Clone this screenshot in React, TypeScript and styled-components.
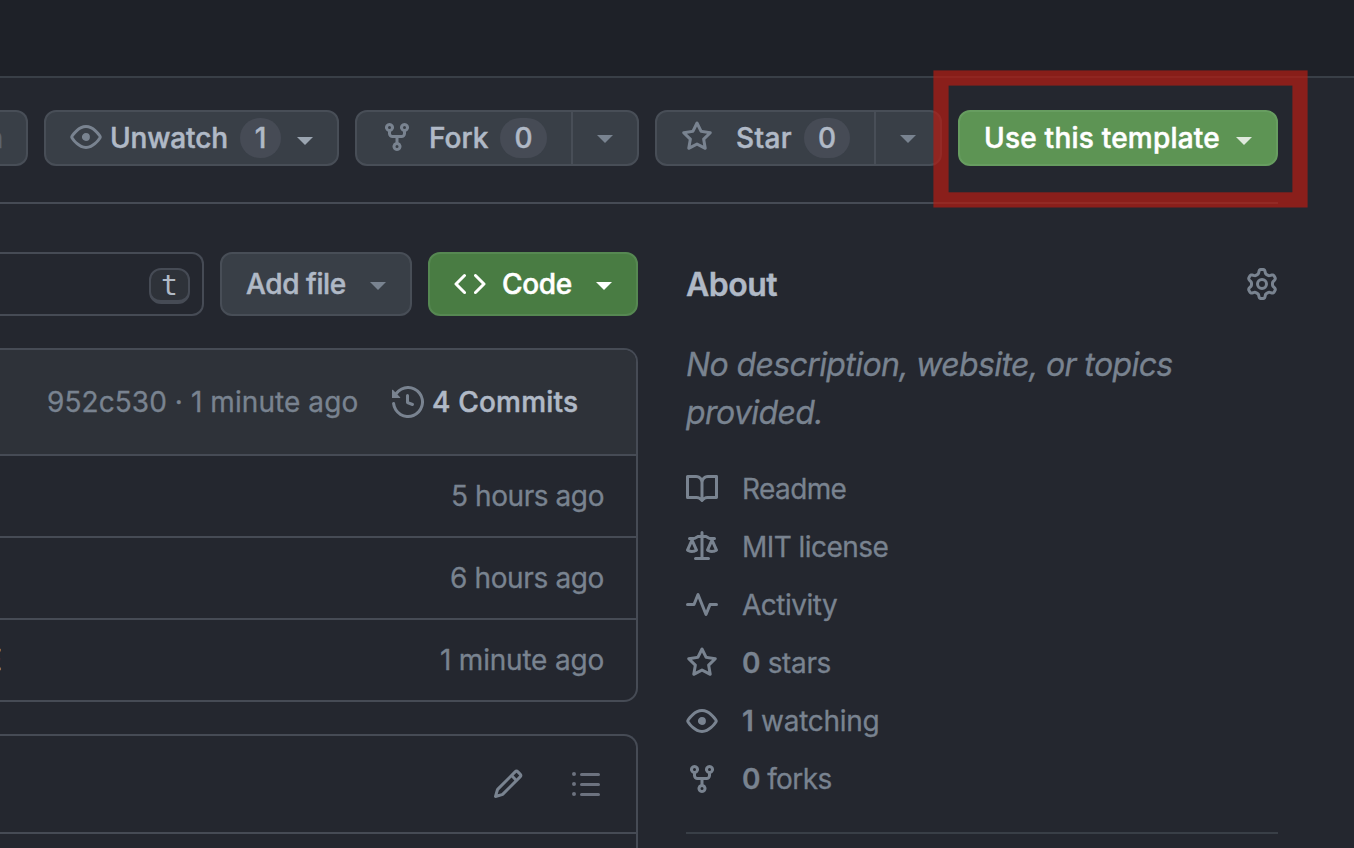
import React from "react";
import styled, { createGlobalStyle } from "styled-components";

const Global = createGlobalStyle`
  * { box-sizing: border-box; }
  html, body { margin: 0; padding: 0; background: #24272f; }
  body {
    font-family: Inter, "Liberation Sans", sans-serif;
    font-size: 28px;
    color: #b0b9c6;
    overflow: hidden;
  }
`;

const Page = styled.div`
  position: relative;
  width: 1354px;
  height: 848px;
  overflow: hidden;
  background: #24272f;
`;

const TopBar = styled.header`
  height: 78px;
  background: #1e2128;
  border-bottom: 2px solid #393f47;
`;

const Actions = styled.div`
  width: 1278px;
  height: 126px;
  padding-top: 32px;
  display: flex;
  gap: 16px;
  border-bottom: 2px solid #464b55;
`;

const Button = styled.div<{ $w: number; $h?: number; $tone?: "green" | "light"; $pad?: number }>`
  width: ${(p) => p.$w}px;
  height: ${(p) => p.$h ?? 56}px;
  padding-left: ${(p) => p.$pad ?? 24}px;
  display: flex;
  align-items: center;
  flex: none;
  overflow: hidden;
  border-radius: 12px;
  border: 2px solid ${(p) => (p.$tone === "green" ? "#568852" : p.$tone === "light" ? "#679d60" : "#484e57")};
  background: ${(p) => (p.$tone === "green" ? "#497c43" : p.$tone === "light" ? "#5d9454" : "#393f47")};
  color: ${(p) => (p.$tone ? "#fff" : "#b0b9c6")};
`;

const PinButton = styled(Button)`
  padding: 0 23px 0 0;
  justify-content: flex-end;
  border-left: 0;
  border-radius: 0 12px 12px 0;
  color: #5d6570;
`;

const Label = styled.span<{ $w?: number; $ls?: number; $weight?: number; $gap?: number }>`
  width: ${(p) => (p.$w ? `${p.$w}px` : "auto")};
  margin-left: ${(p) => p.$gap ?? 0}px;
  flex: none;
  font-weight: ${(p) => p.$weight ?? 500};
  letter-spacing: ${(p) => p.$ls ?? 0}px;
  -webkit-text-stroke: ${(p) => (p.$weight === 400 ? 0.3 : 0.5)}px currentColor;
  line-height: 40px;
  white-space: nowrap;
`;

const Counter = styled.span<{ $w: number }>`
  width: ${(p) => p.$w}px;
  height: 40px;
  flex: none;
  border-radius: 20px;
  background: #464b55;
  font-weight: 500;
  -webkit-text-stroke: 0.4px currentColor;
  line-height: 40px;
  text-align: center;
`;

const Caret = styled.span<{ $gap?: number; $color?: string; $drop?: number }>`
  flex: none;
  margin-left: ${(p) => p.$gap ?? 0}px;
  margin-top: ${(p) => p.$drop ?? 0}px;
  border: 8px solid transparent;
  border-top-color: ${(p) => p.$color ?? "#798390"};
  border-bottom: 0;
`;

const SplitEnd = styled.span<{ $gap: number }>`
  margin-left: ${(p) => p.$gap}px;
  flex: 1;
  height: 52px;
  display: flex;
  align-items: center;
  justify-content: center;
  border-left: 2px solid #484e57;
`;

const Highlight = styled.svg`
  position: absolute;
  left: 930px;
  top: 67px;
  fill: none;
  stroke: rgba(178, 29, 19, 0.72);
  stroke-width: 15.2px;
`;

const Content = styled.main`
  display: flex;
  gap: 48px;
  padding-top: 48px;
`;

const Files = styled.section`
  width: 638px;
  flex: none;
`;

const Toolbar = styled.div`
  display: flex;
  gap: 16px;
`;

const Search = styled.div`
  width: 204px;
  height: 64px;
  padding: 4px 12px 0 0;
  display: flex;
  align-items: center;
  justify-content: flex-end;
  border: 2px solid #464b55;
  border-left: 0;
  border-radius: 0 12px 12px 0;
`;

const Key = styled.kbd`
  width: 41px;
  height: 36px;
  border: 2px solid #464b55;
  border-bottom-width: 4px;
  border-radius: 12px;
  background: #2e3239;
  font: 28px/32px "DejaVu Sans Mono", monospace;
  text-align: center;
`;

const Panel = styled.div`
  margin-top: 32px;
  border: 2px solid #464b55;
  border-left: 0;
  border-radius: 0 14px 14px 0;
  overflow: hidden;
`;

const Commit = styled.div`
  height: 104px;
  padding-left: 47px;
  display: flex;
  align-items: center;
  background: #2e3239;
  color: #798390;
`;

const Bright = styled(Label)`
  color: #b0b9c6;
`;

const FileRow = styled.div`
  height: 82px;
  padding-right: 32px;
  display: flex;
  align-items: center;
  justify-content: space-between;
  border-top: 2px solid #464b55;
  color: #798390;
`;

const FileName = styled.span`
  width: 2px;
  display: flex;
  justify-content: flex-end;
  color: #b0b9c6;
`;

const ReadmePanel = styled(Panel)`
  height: 140px;
  border-radius: 0 14px 0 0;
`;

const ReadmeTools = styled.div`
  height: 98px;
  padding-right: 34px;
  display: flex;
  align-items: center;
  justify-content: flex-end;
  gap: 46px;
  color: #798390;
  border-bottom: 2px solid #464b55;

  svg:last-child { color: #6c727f; }
`;

const About = styled.aside`
  width: 592px;
  height: 582px;
  flex: none;
  color: #798390;
  border-bottom: 2px solid #393f47;
`;

const AboutHead = styled.div`
  height: 64px;
  display: flex;
  align-items: center;
  justify-content: space-between;
`;

const Title = styled.h2`
  margin: 0;
  font-size: 32px;
  font-weight: 600;
  letter-spacing: -0.5px;
  -webkit-text-stroke: 0.4px currentColor;
  color: #b0b9c6;
`;

const Description = styled.p`
  margin: 25px 0 31px;
  font-size: 32px;
  line-height: 48px;
  font-style: italic;
  letter-spacing: -0.61px;
  -webkit-text-stroke: 0.3px currentColor;
`;

const Fact = styled.div`
  height: 42px;
  margin-bottom: 16px;
  display: flex;
  align-items: center;
  gap: 24px;

  b { font-weight: 600; }
`;

const Svg = styled.svg<{ $lift?: number }>`
  flex: none;
  display: block;
  fill: currentColor;
  margin-bottom: ${(p) => p.$lift ?? 0}px;
`;

const MutedSvg = styled(Svg)`
  color: #798390;
`;

const paths = {
  eye: "M8 2c1.981 0 3.671.992 4.933 2.078 1.27 1.091 2.187 2.345 2.637 3.023a1.62 1.62 0 0 1 0 1.798c-.45.678-1.367 1.932-2.637 3.023C11.67 13.008 9.981 14 8 14c-1.981 0-3.671-.992-4.933-2.078C1.797 10.83.88 9.576.43 8.898a1.62 1.62 0 0 1 0-1.798c.45-.677 1.367-1.931 2.637-3.022C4.33 2.992 6.019 2 8 2ZM1.679 7.932a.12.12 0 0 0 0 .136c.411.622 1.241 1.75 2.366 2.717C5.176 11.758 6.527 12.5 8 12.5c1.473 0 2.825-.742 3.955-1.715 1.124-.967 1.954-2.096 2.366-2.717a.12.12 0 0 0 0-.136c-.412-.621-1.242-1.75-2.366-2.717C10.824 4.242 9.473 3.5 8 3.5c-1.473 0-2.825.742-3.955 1.715-1.124.967-1.954 2.096-2.366 2.717ZM8 10a2 2 0 1 1-.001-3.999A2 2 0 0 1 8 10Z",
  fork: "M5 5.372v.878c0 .414.336.75.75.75h4.5a.75.75 0 0 0 .75-.75v-.878a2.25 2.25 0 1 1 1.5 0v.878a2.25 2.25 0 0 1-2.25 2.25h-1.5v2.128a2.251 2.251 0 1 1-1.5 0V8.5h-1.5A2.25 2.25 0 0 1 3.5 6.25v-.878a2.25 2.25 0 1 1 1.5 0ZM5 3.25a.75.75 0 1 0-1.5 0 .75.75 0 0 0 1.5 0Zm6.75.75a.75.75 0 1 0 0-1.5.75.75 0 0 0 0 1.5Zm-3 8.75a.75.75 0 1 0-1.5 0 .75.75 0 0 0 1.5 0Z",
  star: "M8 .25a.75.75 0 0 1 .673.418l1.882 3.815 4.21.612a.75.75 0 0 1 .416 1.279l-3.046 2.97.719 4.192a.751.751 0 0 1-1.088.791L8 12.347l-3.766 1.98a.75.75 0 0 1-1.088-.79l.72-4.194L.818 6.374a.75.75 0 0 1 .416-1.28l4.21-.611L7.327.668A.75.75 0 0 1 8 .25Zm0 2.445L6.615 5.5a.75.75 0 0 1-.564.41l-3.097.45 2.24 2.184a.75.75 0 0 1 .216.664l-.528 3.084 2.769-1.456a.75.75 0 0 1 .698 0l2.77 1.456-.53-3.084a.75.75 0 0 1 .216-.664l2.24-2.183-3.096-.45a.75.75 0 0 1-.564-.41L8 2.694Z",
  code: "m11.28 3.22 4.25 4.25a.75.75 0 0 1 0 1.06l-4.25 4.25a.749.749 0 0 1-1.275-.326.749.749 0 0 1 .215-.734L13.94 8l-3.72-3.72a.749.749 0 0 1 .326-1.275.749.749 0 0 1 .734.215Zm-6.56 0a.751.751 0 0 1 1.042.018.751.751 0 0 1 .018 1.042L2.06 8l3.72 3.72a.749.749 0 0 1-.326 1.275.749.749 0 0 1-.734-.215L.47 8.53a.75.75 0 0 1 0-1.06Z",
  history: "m.427 1.927 1.215 1.215a8.002 8.002 0 1 1-1.6 5.685.75.75 0 1 1 1.493-.154 6.5 6.5 0 1 0 1.18-4.458l1.358 1.358A.25.25 0 0 1 3.896 6H.25A.25.25 0 0 1 0 5.75V2.104a.25.25 0 0 1 .427-.177ZM7.75 4a.75.75 0 0 1 .75.75v2.992l2.028.812a.75.75 0 0 1-.557 1.392l-2.5-1A.751.751 0 0 1 7 8.25v-3.5A.75.75 0 0 1 7.75 4Z",
  gear: "M8 0a8.2 8.2 0 0 1 .701.031C9.444.095 9.99.645 10.16 1.29l.288 1.107c.018.066.079.158.212.224.231.114.454.243.668.386.123.082.233.09.299.071l1.103-.303c.644-.176 1.392.021 1.82.63.27.385.506.792.704 1.218.315.675.111 1.422-.364 1.891l-.814.806c-.049.048-.098.147-.088.294.016.257.016.515 0 .772-.01.147.038.246.088.294l.814.806c.475.469.679 1.216.364 1.891a7.977 7.977 0 0 1-.704 1.217c-.428.61-1.176.807-1.82.63l-1.102-.302c-.067-.019-.177-.011-.3.071a5.909 5.909 0 0 1-.668.386c-.133.066-.194.158-.211.224l-.29 1.106c-.168.646-.715 1.196-1.458 1.26a8.006 8.006 0 0 1-1.402 0c-.743-.064-1.289-.614-1.458-1.26l-.289-1.106c-.018-.066-.079-.158-.212-.224a5.738 5.738 0 0 1-.668-.386c-.123-.082-.233-.09-.299-.071l-1.103.303c-.644.176-1.392-.021-1.82-.63a8.12 8.12 0 0 1-.704-1.218c-.315-.675-.111-1.422.363-1.891l.815-.806c.05-.048.098-.147.088-.294a6.214 6.214 0 0 1 0-.772c.01-.147-.038-.246-.088-.294l-.815-.806C.635 6.045.431 5.298.746 4.623a7.92 7.92 0 0 1 .704-1.217c.428-.61 1.176-.807 1.82-.63l1.102.302c.067.019.177.011.3-.071.214-.143.437-.272.668-.386.133-.066.194-.158.211-.224l.29-1.106C6.009.645 6.556.095 7.299.03 7.53.01 7.764 0 8 0Zm-.571 1.525c-.036.003-.108.036-.137.146l-.289 1.105c-.147.561-.549.967-.998 1.189-.173.086-.34.183-.5.29-.417.278-.97.423-1.529.27l-1.103-.303c-.109-.03-.175.016-.195.045-.22.312-.412.644-.573.99-.014.031-.021.11.059.19l.815.806c.411.406.562.957.53 1.456a4.709 4.709 0 0 0 0 .582c.032.499-.119 1.05-.53 1.456l-.815.806c-.081.08-.073.159-.059.19.162.346.353.677.573.989.02.03.085.076.195.046l1.102-.303c.56-.153 1.113-.008 1.53.27.161.107.328.204.501.29.447.222.85.629.997 1.189l.289 1.105c.029.109.101.143.137.146a6.6 6.6 0 0 0 1.142 0c.036-.003.108-.036.137-.146l.289-1.105c.147-.561.549-.967.998-1.189.173-.086.34-.183.5-.29.417-.278.97-.423 1.529-.27l1.103.303c.109.029.175-.016.195-.045.22-.313.411-.644.573-.99.014-.031.021-.11-.059-.19l-.815-.806c-.411-.406-.562-.957-.53-1.456a4.709 4.709 0 0 0 0-.582c-.032-.499.119-1.05.53-1.456l.815-.806c.081-.08.073-.159.059-.19a6.464 6.464 0 0 0-.573-.989c-.02-.03-.085-.076-.195-.046l-1.102.303c-.56.153-1.113.008-1.53-.27a4.44 4.44 0 0 0-.501-.29c-.447-.222-.85-.629-.997-1.189l-.289-1.105c-.029-.11-.101-.143-.137-.146a6.6 6.6 0 0 0-1.142 0ZM11 8a3 3 0 1 1-6 0 3 3 0 0 1 6 0ZM9.5 8a1.5 1.5 0 1 0-3.001.001A1.5 1.5 0 0 0 9.5 8Z",
  book: "M0 1.75A.75.75 0 0 1 .75 1h4.253c1.227 0 2.317.59 3 1.501A3.743 3.743 0 0 1 11.006 1h4.245a.75.75 0 0 1 .75.75v10.5a.75.75 0 0 1-.75.75h-4.507a2.25 2.25 0 0 0-1.591.659l-.622.621a.75.75 0 0 1-1.06 0l-.622-.621A2.25 2.25 0 0 0 5.258 13H.75a.75.75 0 0 1-.75-.75Zm7.251 10.324.004-5.073-.002-2.253A2.25 2.25 0 0 0 5.003 2.5H1.5v9h3.757a3.75 3.75 0 0 1 1.994.574ZM8.755 4.75l-.004 7.322a3.752 3.752 0 0 1 1.992-.572H14.5v-9h-3.495a2.25 2.25 0 0 0-2.25 2.25Z",
  law: "M8.75.75V2h.985c.304 0 .603.08.867.231l1.29.736c.038.022.08.033.124.033h2.234a.75.75 0 0 1 0 1.5h-.427l2.111 4.692a.75.75 0 0 1-.154.838l-.53-.53.529.531-.001.002-.002.002-.006.006-.006.005-.01.01-.045.04c-.21.176-.441.327-.686.45C14.556 10.78 13.88 11 13 11a4.498 4.498 0 0 1-2.023-.454 3.544 3.544 0 0 1-.686-.45l-.045-.04-.016-.015-.006-.006-.004-.004v-.001a.75.75 0 0 1-.154-.838L12.178 4.5h-.162c-.305 0-.604-.079-.868-.231l-1.29-.736a.245.245 0 0 0-.124-.033H8.75V13h2.5a.75.75 0 0 1 0 1.5h-6.5a.75.75 0 0 1 0-1.5h2.5V3.5h-.984a.245.245 0 0 0-.124.033l-1.289.737c-.265.15-.564.23-.869.23h-.162l2.112 4.692a.75.75 0 0 1-.154.838l-.53-.53.529.531-.001.002-.002.002-.006.006-.016.015-.045.04c-.21.176-.441.327-.686.45C4.556 10.78 3.88 11 3 11a4.498 4.498 0 0 1-2.023-.454 3.544 3.544 0 0 1-.686-.45l-.045-.04-.016-.015-.006-.006-.004-.004v-.001a.75.75 0 0 1-.154-.838L2.178 4.5H1.75a.75.75 0 0 1 0-1.5h2.234a.249.249 0 0 0 .125-.033l1.288-.737c.265-.15.564-.23.869-.23h.984V.75a.75.75 0 0 1 1.5 0Zm2.945 8.477c.285.135.718.273 1.305.273s1.02-.138 1.305-.273L13 6.327Zm-10 0c.285.135.718.273 1.305.273s1.02-.138 1.305-.273L3 6.327Z",
  pulse: "M6 2c.306 0 .582.187.696.471L10 10.731l1.304-3.26A.751.751 0 0 1 12 7h3.25a.75.75 0 0 1 0 1.5h-2.742l-1.812 4.528a.751.751 0 0 1-1.392 0L6 4.77 4.696 8.03A.75.75 0 0 1 4 8.5H.75a.75.75 0 0 1 0-1.5h2.742l1.812-4.529A.751.751 0 0 1 6 2Z",
  pencil: "M11.013 1.427a1.75 1.75 0 0 1 2.474 0l1.086 1.086a1.75 1.75 0 0 1 0 2.474l-8.61 8.61c-.21.21-.47.364-.756.445l-3.251.93a.75.75 0 0 1-.927-.928l.929-3.25c.081-.286.235-.547.445-.758l8.61-8.61Zm.176 4.823L9.75 4.81l-6.286 6.287a.253.253 0 0 0-.064.108l-.558 1.953 1.953-.558a.253.253 0 0 0 .108-.064Zm1.238-3.763a.25.25 0 0 0-.354 0L10.811 3.75l1.439 1.44 1.263-1.263a.25.25 0 0 0 0-.354Z",
  list: "M5.75 2.5h8.5a.75.75 0 0 1 0 1.5h-8.5a.75.75 0 0 1 0-1.5Zm0 5h8.5a.75.75 0 0 1 0 1.5h-8.5a.75.75 0 0 1 0-1.5Zm0 5h8.5a.75.75 0 0 1 0 1.5h-8.5a.75.75 0 0 1 0-1.5ZM2 14a1 1 0 1 1 0-2 1 1 0 0 1 0 2Zm1-6a1 1 0 1 1-2 0 1 1 0 0 1 2 0ZM2 4a1 1 0 1 1 0-2 1 1 0 0 1 0 2Z",
};

type IconProps = { name: keyof typeof paths; muted?: boolean; lift?: number };

const Icon = ({ name, muted, lift }: IconProps) => {
  const Shape = muted ? MutedSvg : Svg;
  return (
    <Shape width="32" height="32" viewBox="0 0 16 16" $lift={lift} aria-hidden="true">
      <path d={paths[name]} />
    </Shape>
  );
};

const files = [
  { name: "", age: "5 hours ago", ls: -0.42 },
  { name: "", age: "6 hours ago", ls: -0.36 },
  { name: "LICENSE", age: "1 minute ago", ls: -0.2 },
];

const facts: { icon: keyof typeof paths; count?: string; text: string; ls: number }[] = [
  { icon: "book", text: "Readme", ls: -0.6 },
  { icon: "law", text: "MIT license", ls: -0.55 },
  { icon: "pulse", text: "Activity", ls: -0.5 },
  { icon: "star", count: "0", text: " stars", ls: -0.35 },
  { icon: "eye", count: "1", text: " watching", ls: -0.3 },
  { icon: "fork", count: "0", text: " forks", ls: -0.6 },
];

export default function App() {
  return (
    <Page>
      <Global />
      <TopBar />
      <Actions>
        <PinButton $w={28}><Label>Pin</Label></PinButton>
        <Button $w={295}>
          <Icon name="eye" muted lift={2} />
          <Label $gap={8} $w={130} $ls={-0.15}>Unwatch</Label>
          <Counter $w={41}>1</Counter>
          <Caret $gap={16} $color="#9ba5b1" $drop={6} />
        </Button>
        <Button $w={284}>
          <Icon name="fork" muted lift={2} />
          <Label $gap={16} $w={71}>Fork</Label>
          <Counter $w={47}>0</Counter>
          <SplitEnd $gap={24}><Caret $drop={2} /></SplitEnd>
        </Button>
        <Button $w={287}>
          <Icon name="star" muted lift={2} />
          <Label $gap={23} $w={68} $ls={0.35}>Star</Label>
          <Counter $w={46}>0</Counter>
          <SplitEnd $gap={24}><Caret $drop={2} /></SplitEnd>
        </Button>
        <Button $w={320} $tone="light">
          <Label $w={236} $ls={0.22}>Use this template</Label>
          <Caret $gap={16} $color="#dfe9dd" $drop={6} />
        </Button>
      </Actions>
      <Content>
        <Files>
          <Toolbar>
            <Search><Key>t</Key></Search>
            <Button $w={192} $h={64}>
              <Label $w={100} $ls={-0.4}>Add file</Label>
              <Caret $gap={24} $drop={4} />
            </Button>
            <Button $w={210} $h={64} $tone="green">
              <Icon name="code" />
              <Label $gap={16} $w={70} $ls={-0.3}>Code</Label>
              <Caret $gap={24} $color="#fff" $drop={4} />
            </Button>
          </Toolbar>
          <Panel>
            <Commit>
              <Label $w={345} $weight={400} $ls={0.07}>952c530 · 1 minute ago</Label>
              <Icon name="history" />
              <Bright $gap={8} $ls={0.2}>4 Commits</Bright>
            </Commit>
            {files.map((f) => (
              <FileRow key={f.age}>
                <FileName><Label $weight={400}>{f.name}</Label></FileName>
                <Label $weight={400} $ls={f.ls}>{f.age}</Label>
              </FileRow>
            ))}
          </Panel>
          <ReadmePanel>
            <ReadmeTools>
              <Icon name="pencil" />
              <Icon name="list" />
            </ReadmeTools>
          </ReadmePanel>
        </Files>
        <About>
          <AboutHead>
            <Title>About</Title>
            <Icon name="gear" />
          </AboutHead>
          <Description>No description, website, or topics provided.</Description>
          {facts.map((f) => (
            <Fact key={f.text}>
              <Icon name={f.icon} />
              <Label $weight={400} $ls={f.ls}>{f.count && <b>{f.count}</b>}{f.text}</Label>
            </Fact>
          ))}
        </About>
      </Content>
      <Highlight width="382" height="144" aria-hidden="true">
        <rect x="11" y="11" width="359" height="121.9" />
      </Highlight>
    </Page>
  );
}
